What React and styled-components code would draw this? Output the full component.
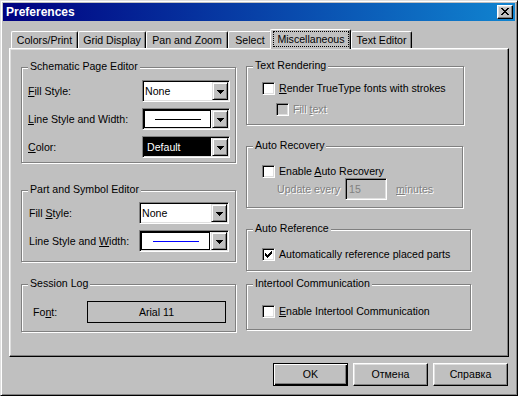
import React from 'react';
import styled, { createGlobalStyle } from 'styled-components';

const Global = createGlobalStyle`
  html, body { margin: 0; padding: 0; background: #c0c0c0; }
  body {
    font-family: "Liberation Sans", Arial, sans-serif;
    font-size: 10.6px;
    line-height: 13px;
    color: #000;
  }
  * { box-sizing: border-box; }
`;

const Window = styled.div`
  width: 518px;
  height: 396px;
  background: #c0c0c0;
  border: 1px solid;
  border-color: #dfdfdf #000 #000 #dfdfdf;
  box-shadow: inset 1px 1px #fff, inset -1px -1px #808080;
  padding: 2px;
  display: flex;
  flex-direction: column;
`;

const TitleBar = styled.div`
  height: 18px;
  flex: none;
  display: flex;
  align-items: center;
  justify-content: space-between;
  padding: 0 2px 0 3px;
  background: linear-gradient(to right, #000080, #1084d0);
  color: #fff;
  font-weight: bold;
  font-size: 12px;
`;

const CloseButton = styled.div`
  width: 16px;
  height: 14px;
  background: #c0c0c0;
  border: 1px solid;
  border-color: #fff #000 #000 #fff;
  box-shadow: inset -1px -1px #808080, inset 1px 1px #dfdfdf;
  display: flex;
  justify-content: center;
  align-items: flex-start;
  padding-top: 2px;
`;

const Body = styled.div`
  flex: 1;
  display: flex;
  flex-direction: column;
  padding: 8px 6px 0 6px;
`;

const TabStrip = styled.div`
  height: 19px;
  display: flex;
  align-items: flex-end;
  padding-left: 2px;
`;

const Tab = styled.div`
  position: relative;
  width: ${p => p.$w}px;
  height: ${p => (p.$active ? 20 : 17)}px;
  margin-bottom: ${p => (p.$active ? -1 : 0)}px;
  margin-left: ${p => (p.$active ? -2 : 0)}px;
  z-index: ${p => (p.$active ? 2 : 1)};
  background: #c0c0c0;
  border-top: 1px solid #fff;
  border-left: 1px solid #fff;
  border-right: 1px solid #000;
  border-radius: 2px 2px 0 0;
  box-shadow: inset -1px 0 #808080;
  display: flex;
  justify-content: center;
  align-items: ${p => (p.$active ? 'flex-start' : 'center')};
  padding: ${p => (p.$active ? '1px 1px 0 2px' : '0')};
  white-space: nowrap;
`;

const FocusLabel = styled.span`
  flex: 1;
  height: 16px;
  border: 1px dotted #000;
  text-align: center;
  line-height: 14px;
`;

const Panel = styled.div`
  height: 309px;
  flex: none;
  border: 1px solid;
  border-color: #fff #000 #000 #fff;
  box-shadow: inset -1px -1px #808080, inset 1px 1px #dfdfdf;
  display: grid;
  grid-template-columns: 215px 1fr;
  column-gap: 10px;
  align-items: start;
  padding: 1px 0 0 11px;
`;

const Column = styled.div`
  display: flex;
  flex-direction: column;
  align-items: flex-start;
`;

const Group = styled.div`
  position: relative;
  width: ${p => p.$w}px;
  height: ${p => p.$h}px;
  margin-top: ${p => p.$mt}px;
  border: 1px solid #808080;
  box-shadow: inset 1px 1px #fff, 1px 1px #fff;
  padding: ${p => p.$pt}px ${p => p.$pr || 0}px 0 ${p => p.$pl}px;
  display: flex;
  flex-direction: column;
  gap: ${p => p.$gap || 0}px;
`;

const Legend = styled.span`
  position: absolute;
  top: -8px;
  left: 6px;
  padding: 0 2px;
  background: #c0c0c0;
  line-height: 13px;
  white-space: nowrap;
`;

const FieldRow = styled.div`
  display: flex;
  align-items: center;
  height: 22px;
`;

const FieldLabel = styled.span`
  flex: 1;
  white-space: nowrap;
`;

const U = styled.span`
  text-decoration: underline;
  text-underline-offset: 1px;
`;

const Combo = styled.div`
  width: ${p => p.$w}px;
  height: 22px;
  flex: none;
  border: 1px solid;
  border-color: #808080 #fff #fff #808080;
  box-shadow: inset 1px 1px #000, inset -1px -1px #dfdfdf;
  background: #fff;
  padding: 1px;
  display: flex;
`;

const ComboText = styled.div`
  flex: 1;
  display: flex;
  align-items: center;
  padding-left: 1px;
`;

const ComboColor = styled.div`
  flex: 1;
  display: flex;
  align-items: center;
  margin-right: 1px;
  padding-left: 3px;
  background: #000;
  color: #fff;
`;

const ComboLine = styled.div`
  flex: 1;
  display: flex;
  align-items: center;
  justify-content: center;
  margin-right: 1px;
  border: 1px solid #000;
`;

const LineSample = styled.div`
  width: 46px;
  height: 1px;
  background: ${p => p.$color};
`;

const DropButton = styled.div`
  width: 16px;
  flex: none;
  background: #c0c0c0;
  border: 1px solid;
  border-color: #dfdfdf #000 #000 #dfdfdf;
  box-shadow: inset 1px 1px #fff, inset -1px -1px #808080;
  display: flex;
  align-items: center;
  justify-content: center;
  padding-top: 2px;
`;

const FontBox = styled.div`
  width: 139px;
  height: 22px;
  flex: none;
  border: 1px solid #000;
  display: flex;
  align-items: center;
  justify-content: center;
`;

const CheckRow = styled.div`
  display: flex;
  align-items: center;
  gap: 4px;
  height: 13px;
  margin-left: ${p => p.$indent || 0}px;
  white-space: nowrap;
`;

const Box = styled.span`
  width: 13px;
  height: 13px;
  flex: none;
  border: 1px solid;
  border-color: #808080 #fff #fff #808080;
  box-shadow: inset 1px 1px #000, inset -1px -1px #dfdfdf;
  background: ${p => (p.$disabled ? '#c0c0c0' : '#fff')};
  display: flex;
  align-items: center;
  justify-content: center;
`;

const Disabled = styled.span`
  color: #808080;
  text-shadow: 1px 1px 0 #fff;
`;

const UpdateRow = styled.div`
  display: flex;
  align-items: center;
  height: 22px;
  margin-left: 15px;
  white-space: nowrap;
`;

const UpdateLabel = styled(Disabled)`
  width: 68px;
`;

const NumberInput = styled.div`
  width: 42px;
  height: 22px;
  border: 1px solid;
  border-color: #808080 #fff #fff #808080;
  box-shadow: inset 1px 1px #000, inset -1px -1px #dfdfdf;
  background: #c0c0c0;
  color: #808080;
  display: flex;
  align-items: center;
  padding-left: 3px;
  margin-right: 9px;
`;

const ButtonRow = styled.div`
  display: flex;
  justify-content: flex-end;
  gap: 5px;
  margin-top: 6px;
  padding-right: 1px;
`;

const Button = styled.button`
  width: 75px;
  height: 23px;
  padding: 0;
  font: inherit;
  color: #000;
  background: #c0c0c0;
  border: 1px solid;
  border-color: ${p => (p.$default ? '#000' : '#fff #000 #000 #fff')};
  box-shadow: ${p =>
    p.$default
      ? 'inset 1px 1px #fff, inset -1px -1px #000, inset -2px -2px #808080'
      : 'inset -1px -1px #808080, inset 1px 1px #dfdfdf'};
`;

const Arrow = () => (
  <svg width="7" height="4" viewBox="0 0 7 4" shapeRendering="crispEdges">
    <path d="M0 0h7v1H0zM1 1h5v1H1zM2 2h3v1H2zM3 3h1v1H3z" fill="#000" />
  </svg>
);

const CloseX = () => (
  <svg width="8" height="7" viewBox="0 0 8 7" shapeRendering="crispEdges">
    <path
      d="M0 0h2v1H0zM6 0h2v1H6zM1 1h2v1H1zM5 1h2v1H5zM2 2h4v1H2zM3 3h2v1H3zM2 4h4v1H2zM1 5h2v1H1zM5 5h2v1H5zM0 6h2v1H0zM6 6h2v1H6z"
      fill="#000"
    />
  </svg>
);

const Check = () => (
  <svg width="7" height="7" viewBox="0 0 7 7" shapeRendering="crispEdges">
    <path
      d="M6 0h1v1H6zM5 1h2v1H5zM0 2h1v1H0zM4 2h3v1H4zM0 3h2v1H0zM3 3h3v1H3zM0 4h5v1H0zM1 5h3v1H1zM2 6h1v1H2z"
      fill="#000"
    />
  </svg>
);

const CheckBox = ({ checked, disabled }) => (
  <Box $disabled={disabled}>{checked && <Check />}</Box>
);

const ComboBox = ({ w, children }) => (
  <Combo $w={w}>
    {children}
    <DropButton>
      <Arrow />
    </DropButton>
  </Combo>
);

const tabs = [
  { label: 'Colors/Print', w: 67 },
  { label: 'Grid Display', w: 68 },
  { label: 'Pan and Zoom', w: 82 },
  { label: 'Select', w: 44 },
  { label: 'Miscellaneous', w: 81, active: true },
  { label: 'Text Editor', w: 61 },
];

export default function App() {
  return (
    <>
      <Global />
      <Window>
        <TitleBar>
          <span>Preferences</span>
          <CloseButton>
            <CloseX />
          </CloseButton>
        </TitleBar>
        <Body>
          <TabStrip>
            {tabs.map(t => (
              <Tab key={t.label} $w={t.w} $active={t.active}>
                {t.active ? <FocusLabel>{t.label}</FocusLabel> : t.label}
              </Tab>
            ))}
          </TabStrip>
          <Panel>
            <Column>
              <Group $w={215} $h={96} $mt={17} $pt={12} $pl={6} $pr={5} $gap={6}>
                <Legend>Schematic Page Editor</Legend>
                <FieldRow>
                  <FieldLabel><U>F</U>ill Style:</FieldLabel>
                  <ComboBox w={88}>
                    <ComboText>None</ComboText>
                  </ComboBox>
                </FieldRow>
                <FieldRow>
                  <FieldLabel><U>L</U>ine Style and Width:</FieldLabel>
                  <ComboBox w={88}>
                    <ComboLine>
                      <LineSample $color="#000" />
                    </ComboLine>
                  </ComboBox>
                </FieldRow>
                <FieldRow>
                  <FieldLabel><U>C</U>olor:</FieldLabel>
                  <ComboBox w={88}>
                    <ComboColor>Default</ComboColor>
                  </ComboBox>
                </FieldRow>
              </Group>

              <Group $w={215} $h={72} $mt={27} $pt={11} $pl={7} $pr={6} $gap={6}>
                <Legend>Part and Symbol Editor</Legend>
                <FieldRow>
                  <FieldLabel>Fill <U>S</U>tyle:</FieldLabel>
                  <ComboBox w={90}>
                    <ComboText>None</ComboText>
                  </ComboBox>
                </FieldRow>
                <FieldRow>
                  <FieldLabel>Line Style and <U>W</U>idth:</FieldLabel>
                  <ComboBox w={90}>
                    <ComboLine>
                      <LineSample $color="#0000ff" />
                    </ComboLine>
                  </ComboBox>
                </FieldRow>
              </Group>

              <Group $w={215} $h={48} $mt={22} $pt={16} $pl={11} $pr={9}>
                <Legend>Session Log</Legend>
                <FieldRow>
                  <FieldLabel>Fo<U>n</U>t:</FieldLabel>
                  <FontBox>Arial 11</FontBox>
                </FieldRow>
              </Group>
            </Column>

            <Column>
              <Group $w={218} $h={59} $mt={16} $pt={15} $pl={15} $gap={8}>
                <Legend>Text Rendering</Legend>
                <CheckRow>
                  <CheckBox />
                  <span><U>R</U>ender TrueType fonts with strokes</span>
                </CheckRow>
                <CheckRow $indent={14}>
                  <CheckBox disabled />
                  <Disabled>Fill <U>t</U>ext</Disabled>
                </CheckRow>
              </Group>

              <Group $w={217} $h={62} $mt={21} $pt={18} $pl={15}>
                <Legend>Auto Recovery</Legend>
                <CheckRow>
                  <CheckBox />
                  <span>Enable <U>A</U>uto Recovery</span>
                </CheckRow>
                <UpdateRow>
                  <UpdateLabel>Update every</UpdateLabel>
                  <NumberInput>15</NumberInput>
                  <Disabled><U>m</U>inutes</Disabled>
                </UpdateRow>
              </Group>

              <Group $w={225} $h={42} $mt={21} $pt={18} $pl={15}>
                <Legend>Auto Reference</Legend>
                <CheckRow>
                  <CheckBox checked />
                  <span>Automatically reference placed parts</span>
                </CheckRow>
              </Group>

              <Group $w={225} $h={46} $mt={13} $pt={20} $pl={15}>
                <Legend>Intertool Communication</Legend>
                <CheckRow>
                  <CheckBox />
                  <span><U>E</U>nable Intertool Communication</span>
                </CheckRow>
              </Group>
            </Column>
          </Panel>
          <ButtonRow>
            <Button $default>OK</Button>
            <Button>Отмена</Button>
            <Button>Справка</Button>
          </ButtonRow>
        </Body>
      </Window>
    </>
  );
}
